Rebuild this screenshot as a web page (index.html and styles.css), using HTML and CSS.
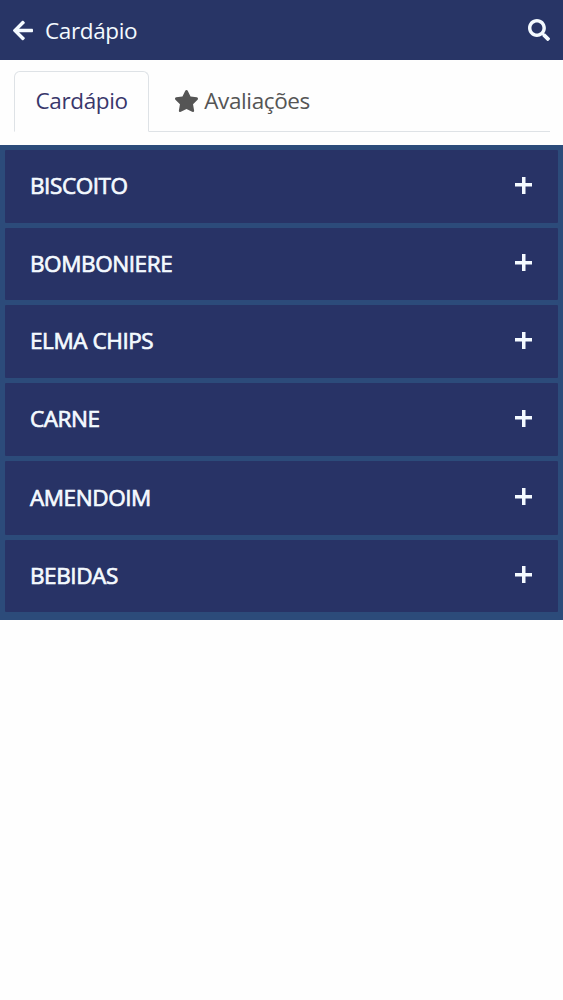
FILE: index.html
```html
<!DOCTYPE html>
<html lang="pt-BR">
<head>
  <meta charset="UTF-8" />
  <meta name="viewport" content="width=device-width, initial-scale=1.0" />
  <title>Cardápio</title>
  <link rel="stylesheet" href="styles.css">
</head>
<body>
  <header class="topbar">
    <a class="back" href="#" aria-label="Voltar">
      <svg viewBox="0 0 448 512"><path d="M257.500 445.100l-22.200 22.200c-9.400 9.400-24.600 9.400-33.900 0L7 273c-9.400-9.400-9.400-24.600 0-33.900L201.400 44.700c9.400-9.400 24.600-9.400 33.900 0l22.200 22.200c9.500 9.500 9.300 25-.4 34.300L136.600 216H424c13.300 0 24 10.700 24 24v32c0 13.300-10.700 24-24 24H136.600l120.500 114.800c9.800 9.300 10 24.800.4 34.300z"/></svg>
    </a>
    <h1>Cardápio</h1>
    <a class="search" href="#" aria-label="Buscar">
      <svg viewBox="0 0 512 512"><path d="M505 442.700L405.300 343c-4.500-4.500-10.600-7-17-7H372c27.600-35.300 44-79.700 44-128C416 93.100 322.900 0 208 0S0 93.100 0 208s93.100 208 208 208c48.300 0 92.700-16.400 128-44v16.300c0 6.400 2.500 12.500 7 17l99.700 99.700c9.400 9.400 24.600 9.400 33.900 0l28.300-28.300c9.400-9.400 9.400-24.600.1-34zM208 336c-70.700 0-128-57.200-128-128 0-70.700 57.200-128 128-128 70.700 0 128 57.200 128 128 0 70.700-57.200 128-128 128z"/></svg>
    </a>
  </header>

  <nav class="tabs">
    <a class="tab active" href="#">Cardápio</a>
    <a class="tab" href="#">
      <svg viewBox="0 0 576 512"><path d="M259.300 17.800L194 150.200 47.900 171.500c-26.200 3.800-36.700 36.100-17.700 54.600l105.700 103-25 145.500c-4.500 26.300 23.200 46 46.400 33.700L288 439.600l130.700 68.700c23.200 12.200 50.900-7.400 46.400-33.700l-25-145.500 105.700-103c19-18.500 8.500-50.800-17.700-54.600L382 150.200 316.700 17.800c-11.700-23.600-45.600-23.900-57.400 0z"/></svg>
      Avaliações
    </a>
  </nav>

  <main class="menu">
    <button class="category"><span>BISCOITO</span><i class="plus"></i></button>
    <button class="category"><span>BOMBONIERE</span><i class="plus"></i></button>
    <button class="category"><span>ELMA CHIPS</span><i class="plus"></i></button>
    <button class="category"><span>CARNE</span><i class="plus"></i></button>
    <button class="category"><span>AMENDOIM</span><i class="plus"></i></button>
    <button class="category"><span>BEBIDAS</span><i class="plus"></i></button>
  </main>
</body>
</html>
```

FILE: styles.css
```css
* {
  box-sizing: border-box;
}

body {
  margin: 0;
  background-color: #fefefe;
  font-family: "Open Sans", sans-serif;
  font-size: 22.5px;
  letter-spacing: -0.37px;
}

a {
  color: inherit;
  text-decoration: none;
}

svg {
  display: block;
  fill: currentColor;
}

.topbar {
  display: flex;
  align-items: center;
  height: 60px;
  padding: 0 13px;
  background-color: #283566;
  color: #f4faff;
}

.topbar h1 {
  flex: 1;
  margin: 1px 0 0 12px;
  font-size: 22.5px;
  font-weight: 400;
  line-height: 30px;
}

.back svg {
  width: 20px;
  height: 23px;
}

.search svg {
  width: 22px;
  height: 22px;
}

.tabs {
  display: flex;
  height: 61px;
  margin: 11px 13px 13px 14px;
  border-bottom: 1px solid #dee2e6;
}

.tab {
  display: flex;
  align-items: center;
  height: 61px;
  padding: 0 24px 2px;
  border: 1px solid transparent;
  color: #555;
}

.tab.active {
  padding: 0 20.500px 2px;
  border-color: #dee2e6;
  border-bottom-color: #fefefe;
  border-radius: 6px 6px 0 0;
  background-color: #fefefe;
  color: #39376b;
}

.tab svg {
  width: 25px;
  height: 22px;
  margin-right: 5px;
}

.menu {
  display: grid;
  grid-template-rows: 73px 72px 73px 73px 74px 72px;
  gap: 5px;
  padding: 5px 5px 8px;
  background-color: #2c4b7a;
}

.category {
  display: flex;
  align-items: center;
  justify-content: space-between;
  padding: 0 26px 0 25px;
  border: 0;
  border-radius: 1px;
  background-color: #283366;
  color: #f4faff;
  font: 400 22.500px "Open Sans", sans-serif;
  letter-spacing: -0.42px;
  cursor: pointer;
}

.category span {
  margin-bottom: 2px;
  -webkit-text-stroke: 0.7px currentColor;
}

.plus {
  width: 17px;
  height: 17px;
  margin-bottom: 3px;
  background: linear-gradient(currentColor, currentColor) center / 17px 3.500px no-repeat,
              linear-gradient(currentColor, currentColor) center / 3.500px 17px no-repeat;
}
```
